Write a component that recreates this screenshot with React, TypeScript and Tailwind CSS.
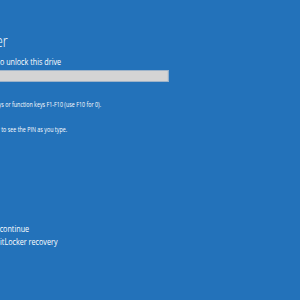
export default function App() {
  return (
    <div className="w-[300px] h-[300px] overflow-hidden bg-[#2372ba] text-white" style={{ fontFamily: '"Open Sans", sans-serif' }}>
      <div className="flex flex-col ml-[-49px] w-[400px] origin-top-left scale-x-[0.8]">
        <div className="mt-[33px] ml-[4px] h-[16px] text-[16px] leading-[16px] font-light whitespace-nowrap">BitLocker</div>
        <div className="mt-[8px] h-[10px] text-[9px] leading-[10px] whitespace-nowrap">Enter the PIN to unlock this drive</div>
        <div className="mt-[3px] h-[12px] w-[272px] bg-[#d4d4d4] border border-[#9db3c9]"></div>
        <div className="mt-[19px] h-[7px] text-[6.7px] leading-[7px] whitespace-nowrap">Use the number keys or function keys F1-F10 (use F10 for 0).</div>
        <div className="mt-[18px] h-[7px] text-[6.7px] leading-[7px] whitespace-nowrap">Press the Insert key to see the PIN as you type.</div>
        <div className="mt-[91px] h-[10px] text-[9px] leading-[10px] whitespace-nowrap">Press Enter to continue</div>
        <div className="mt-[3px] h-[10px] text-[9px] leading-[10px] whitespace-nowrap">Press Esc for BitLocker recovery</div>
      </div>
    </div>
  );
}
